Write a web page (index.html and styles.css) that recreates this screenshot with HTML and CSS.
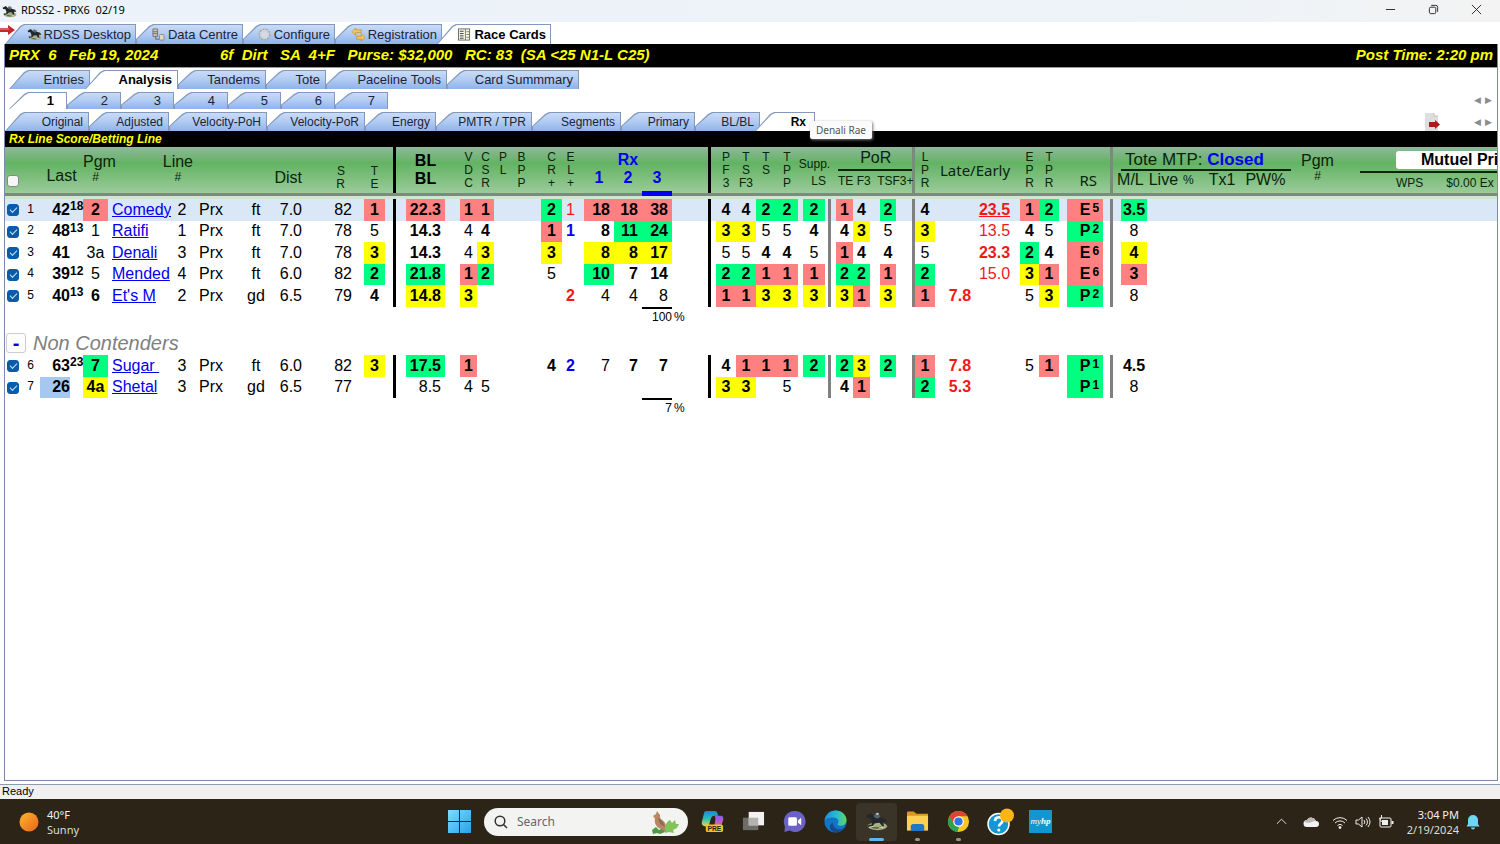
FILE: index.html
```html
<!DOCTYPE html>
<html lang="en">
<head>
	<meta charset="UTF-8">
	<title>RDSS2 - PRX6 02/19</title>
	<link rel="stylesheet" href="styles.css">
</head>
<body>
	<svg class="defs" aria-hidden="true">
		<symbol id="horse" viewBox="0 0 24 20">
			<ellipse cx="13" cy="15" rx="10" ry="4" fill="#a9ae85"/>
			<path d="M3 13c3 3 9 5 14 3" stroke="#5f7040" stroke-width="2" fill="none"/>
			<path d="M1 4l5-3 3 3 2 1 6 1 4 1 2 4-3-1-1 2 1 3h-2l-3-4-5 1-2 3-5 1v-1.500l4-1.500v-3L5 6 2 6.500z" fill="#23292b"/>
			<path d="M9 5l2-4h3l2 4-3 2z" fill="#53646b"/>
			<path d="M12 1h2v2h-2z" fill="#d9dedd"/>
			<path d="M4 16l5-1M14 17l5-1" stroke="#e3dfc8" fill="none"/>
		</symbol>
	</svg>

	<header class="titlebar">
		<svg class="title-icon"><use href="#horse"/></svg>
		<span class="title">RDSS2 - PRX6&nbsp; 02/19</span>
		<div class="win-btns">
			<button aria-label="Minimize"><svg viewBox="0 0 12 12"><path d="M1 6h10"/></svg></button>
			<button aria-label="Restore"><svg viewBox="0 0 12 12"><rect x="1.500" y="3.500" width="7" height="7" rx="1.500"/><path d="M3.500 1.500h5a2 2 0 0 1 2 2v5"/></svg></button>
			<button aria-label="Close"><svg viewBox="0 0 12 12"><path d="M1 1l10 10M11 1L1 11"/></svg></button>
		</div>
	</header>

	<nav class="tabs tabs-main">
		<svg class="red-arrow" viewBox="0 0 15 10"><path d="M0 3h8V0l7 5-7 5V7H0z" fill="#c8262c"/><path d="M0 4h9" stroke="#ec8d8d"/></svg>
		<button class="tab"><svg viewBox="0 0 24 20"><use href="#horse"/></svg>RDSS Desktop</button>
		<button class="tab"><svg viewBox="0 0 16 14"><path d="M2 1h5v8H2zM2 4h5M2 6h5" fill="#c9c5b4" stroke="#77736a"/><path d="M5 9v3h4" stroke="#666" fill="none"/><rect x="9" y="7" width="5" height="6" rx="1" fill="#dedac6" stroke="#8b877b"/></svg>Data Centre</button>
		<button class="tab"><svg viewBox="0 0 16 14"><circle cx="8" cy="7" r="5" fill="none" stroke="#a9a9a9" stroke-width="3" stroke-dasharray="2 1"/><circle cx="8" cy="7" r="4" fill="#cfdcf0" stroke="#d6d4cf" stroke-width="2"/></svg>Configure</button>
		<button class="tab"><svg viewBox="0 0 16 14"><path d="M1 4l4-4v2h6v3H5v3zM15 10l-4 4v-2H6V9h5V6z" fill="#f3c75a" stroke="#c08a26" stroke-width=".7"/></svg>Registration</button>
		<button class="tab active"><svg viewBox="0 0 16 14"><rect x="1.500" y="1" width="12" height="12" fill="#f6f6ee" stroke="#666"/><path d="M3 3.500h4M3 6h4M3 8.500h4M3 11h4" stroke="#333"/><path d="M9 1v12M10 4h3M10 7h3M10 10h3" stroke="#807c55"/></svg>Race Cards</button>
	</nav>

	<main class="panel">
		<div class="race-bar">
			<span class="race-date">PRX  6   Feb 19, 2024</span>
			<span class="race-info">6f  Dirt   SA  4+F   Purse: $32,000   RC: 83  (SA &lt;25 N1-L C25)</span>
			<span class="post-time">Post Time: 2:20 pm</span>
		</div>

		<nav class="tabs tabs-sub">
			<button class="tab w-entries">Entries</button>
			<button class="tab w-analysis active">Analysis</button>
			<button class="tab w-tandems">Tandems</button>
			<button class="tab w-tote">Tote</button>
			<button class="tab w-tools">Paceline Tools</button>
			<button class="tab w-card">Card Summmary</button>
		</nav>

		<nav class="tabs tabs-num">
			<button class="tab active">1</button>
			<button class="tab">2</button>
			<button class="tab">3</button>
			<button class="tab">4</button>
			<button class="tab">5</button>
			<button class="tab">6</button>
			<button class="tab">7</button>
			<div class="scroller">
				<button aria-label="Previous race tabs">◀</button>
				<button aria-label="Next race tabs">▶</button>
			</div>
		</nav>

		<nav class="tabs tabs-view">
			<button class="tab">Original</button>
			<button class="tab">Adjusted</button>
			<button class="tab">Velocity-PoH</button>
			<button class="tab">Velocity-PoR</button>
			<button class="tab">Energy</button>
			<button class="tab">PMTR / TPR</button>
			<button class="tab">Segments</button>
			<button class="tab">Primary</button>
			<button class="tab">BL/BL</button>
			<button class="tab active">Rx</button>
			<div class="tip-anchor"><span class="tip">Denali Rae</span></div>
			<div class="scroller">
				<svg class="doc" viewBox="0 0 16 18"><path d="M0 0h9l4 3v15H0z" fill="#dedede"/><path d="M9 0v3h4" fill="#fff" stroke="#999" stroke-width=".5"/><path d="M4 9h6V7l5 4.500-5 4.500v-2H4z" fill="#a81c1c"/></svg>
				<button aria-label="Previous views">◀</button>
				<button aria-label="Next views">▶</button>
			</div>
		</nav>

		<h1 class="view-title">Rx Line Score/Betting Line</h1>

		<table class="grid">
			<colgroup>
				<col class="c16"><col class="c19"><col class="c30"><col class="c13"><col class="c25"><col class="c63"><col class="c22"><col class="c47"><col class="c32"><col class="c32"><col class="c50"><col class="c31">
				<col class="c11"><col class="c49"><col class="c32"><col class="c17"><col class="c18"><col class="c19"><col class="c31"><col class="c17"><col class="c35"><col class="c28"><col class="c30">
				<col class="c39"><col class="c25"><col class="c20"><col class="c20"><col class="c22"><col class="c27">
				<col class="c6"><col class="c22"><col class="c17"><col class="c26">
				<col class="c19"><col class="c20"><col class="c40"><col class="c40"><col class="c24"><col class="c20"><col class="c44">
				<col class="c10"><col class="c34"><col>
			</colgroup>
			<thead>
				<tr class="head">
					<th class="h-check"><input type="checkbox" aria-label="Select all"></th>
					<th></th>
					<th colspan="2" class="h-last">Last</th>
					<th class="h-two">Pgm<small>#</small></th>
					<th colspan="2" class="h-two h-line"><span>Line<small>#</small></span></th>
					<th></th>
					<th colspan="2" class="h-dist">Dist</th>
					<th class="vert low h-sr">S<br>R</th>
					<th class="vert low g10">T<br>E</th>
					<th class="bar"></th>
					<th class="h-bl g10">BL<br>BL</th>
					<th class="vert g15">V<br>D<br>C</th>
					<th class="vert">C<br>S<br>R</th>
					<th class="vert">P<br>L</th>
					<th class="vert">B<br>P<br>P</th>
					<th class="vert g10">C<br>R<br>+</th>
					<th class="vert">E<br>L<br>+</th>
					<th colspan="3" class="h-rx g5">Rx<div><span>1</span><span>2</span><span class="picked">3</span></div></th>
					<th class="bar"></th>
					<th class="vert g5">P<br>F<br>3</th>
					<th class="vert">T<br>S<br>F3</th>
					<th class="vert">T<br>S</th>
					<th class="vert">T<br>P<br>P</th>
					<th colspan="2" class="h-supp">Supp.<span>LS</span></th>
					<th colspan="3" class="h-por g5"><div>PoR<span>TE F3&nbsp; TSF3+</span></div></th>
					<th class="bar grey"></th>
					<th class="vert">L<br>P<br>R</th>
					<th colspan="2" class="h-late">Late/Early</th>
					<th class="vert g5">E<br>P<br>R</th>
					<th class="vert">T<br>P<br>R</th>
					<th class="h-rs">RS</th>
					<th class="bar grey"></th>
					<th colspan="2" class="h-tote">
						<div class="tote">
							<div class="tote-pool">
								<p class="tote-top">Tote MTP: <b>Closed</b></p>
								<p class="tote-cols"><span>M/L</span> <span>Live</span> <small>%</small> <span class="tx">Tx1</span> <span>PW%</span></p>
							</div>
							<div class="tote-pgm">Pgm<small>#</small></div>
							<div class="mutuel">
								<p class="mutuel-top">Mutuel Pri</p>
								<p class="mutuel-cols"><span>WPS</span><span>$0.00 Ex</span></p>
							</div>
						</div>
					</th>
				</tr>
				<tr class="rule"><td colspan="43"></td></tr>
			</thead>

			<tbody class="horses">
				<tr class="current">
					<td><input type="checkbox" checked aria-label="Comedy"></td><td>1</td><td>42</td><td>18</td><td class="r">2</td><td><a href="#">Comedy</a></td><td>2</td><td>Prx</td><td>ft</td><td>7.0</td><td>82</td><td class="r">1</td>
					<td></td><td class="r">22.3</td><td class="r">1</td><td class="r">1</td><td></td><td></td><td class="g">2</td><td class="red">1</td><td class="r">18</td><td class="r">18</td><td class="r">38</td>
					<td></td><td class="b">4</td><td class="b">4</td><td class="g">2</td><td class="g">2</td><td class="g">2</td>
					<td></td><td class="r">1</td><td class="b">4</td><td class="g">2</td>
					<td></td><td class="b">4</td><td></td><td class="red b u">23.5</td><td class="r">1</td><td class="g">2</td><td class="r">E<sup>5</sup></td>
					<td></td><td class="g">3.5</td><td></td>
				</tr>
				<tr>
					<td><input type="checkbox" checked aria-label="Ratifi"></td><td>2</td><td>48</td><td>13</td><td>1</td><td><a href="#">Ratifi</a></td><td>1</td><td>Prx</td><td>ft</td><td>7.0</td><td>78</td><td>5</td>
					<td></td><td class="b">14.3</td><td>4</td><td class="b">4</td><td></td><td></td><td class="r">1</td><td class="blue b">1</td><td class="b">8</td><td class="g">11</td><td class="g">24</td>
					<td></td><td class="y">3</td><td class="y">3</td><td>5</td><td>5</td><td class="b">4</td>
					<td></td><td class="b">4</td><td class="y">3</td><td>5</td>
					<td></td><td class="y">3</td><td></td><td class="red">13.5</td><td class="b">4</td><td>5</td><td class="g">P<sup>2</sup></td>
					<td></td><td>8</td><td></td>
				</tr>
				<tr>
					<td><input type="checkbox" checked aria-label="Denali"></td><td>3</td><td>41</td><td></td><td>3a</td><td><a href="#">Denali</a></td><td>3</td><td>Prx</td><td>ft</td><td>7.0</td><td>78</td><td class="y">3</td>
					<td></td><td class="b">14.3</td><td>4</td><td class="y">3</td><td></td><td></td><td class="y">3</td><td></td><td class="y">8</td><td class="y">8</td><td class="y">17</td>
					<td></td><td>5</td><td>5</td><td class="b">4</td><td class="b">4</td><td>5</td>
					<td></td><td class="r">1</td><td class="b">4</td><td class="b">4</td>
					<td></td><td>5</td><td></td><td class="red b">23.3</td><td class="g">2</td><td class="b">4</td><td class="r">E<sup>6</sup></td>
					<td></td><td class="y">4</td><td></td>
				</tr>
				<tr>
					<td><input type="checkbox" checked aria-label="Mended"></td><td>4</td><td>39</td><td>12</td><td>5</td><td><a href="#">Mended</a></td><td>4</td><td>Prx</td><td>ft</td><td>6.0</td><td>82</td><td class="g">2</td>
					<td></td><td class="g">21.8</td><td class="r">1</td><td class="g">2</td><td></td><td></td><td>5</td><td></td><td class="g">10</td><td class="b">7</td><td class="b">14</td>
					<td></td><td class="g">2</td><td class="g">2</td><td class="r">1</td><td class="r">1</td><td class="r">1</td>
					<td></td><td class="g">2</td><td class="g">2</td><td class="r">1</td>
					<td></td><td class="g">2</td><td></td><td class="red">15.0</td><td class="y">3</td><td class="r">1</td><td class="r">E<sup>6</sup></td>
					<td></td><td class="r">3</td><td></td>
				</tr>
				<tr>
					<td><input type="checkbox" checked aria-label="Et's M"></td><td>5</td><td>40</td><td>13</td><td class="b">6</td><td><a href="#">Et's M</a></td><td>2</td><td>Prx</td><td>gd</td><td>6.5</td><td>79</td><td class="b">4</td>
					<td></td><td class="y">14.8</td><td class="y">3</td><td></td><td></td><td></td><td></td><td class="red b">2</td><td>4</td><td>4</td><td>8</td>
					<td></td><td class="r">1</td><td class="r">1</td><td class="y">3</td><td class="y">3</td><td class="y">3</td>
					<td></td><td class="y">3</td><td class="r">1</td><td class="y">3</td>
					<td></td><td class="r">1</td><td class="red b">7.8</td><td></td><td>5</td><td class="y">3</td><td class="g">P<sup>2</sup></td>
					<td></td><td>8</td><td></td>
				</tr>
			</tbody>
			<tbody>
				<tr class="total"><td colspan="22"></td><td><span>100</span></td><td colspan="20">%</td></tr>
				<tr class="section"><td colspan="43"><div><button aria-label="Collapse Non Contenders">-</button><em>Non Contenders</em></div></td></tr>
			</tbody>
			<tbody class="horses">
				<tr>
					<td><input type="checkbox" checked aria-label="Sugar"></td><td>6</td><td>63</td><td>23</td><td class="g">7</td><td><a href="#">Sugar&nbsp;</a></td><td>3</td><td>Prx</td><td>ft</td><td>6.0</td><td>82</td><td class="y">3</td>
					<td></td><td class="g">17.5</td><td class="r">1</td><td></td><td></td><td></td><td class="b">4</td><td class="blue b">2</td><td>7</td><td class="b">7</td><td class="b">7</td>
					<td></td><td class="b">4</td><td class="r">1</td><td class="r">1</td><td class="r">1</td><td class="g">2</td>
					<td></td><td class="g">2</td><td class="y">3</td><td class="g">2</td>
					<td></td><td class="r">1</td><td class="red b">7.8</td><td></td><td>5</td><td class="r">1</td><td class="g">P<sup>1</sup></td>
					<td></td><td class="b">4.5</td><td></td>
				</tr>
				<tr>
					<td><input type="checkbox" checked aria-label="Shetal"></td><td>7</td><td class="off">26</td><td></td><td class="y">4a</td><td><a href="#">Shetal</a></td><td>3</td><td>Prx</td><td>gd</td><td>6.5</td><td>77</td><td></td>
					<td></td><td>8.5</td><td>4</td><td>5</td><td></td><td></td><td></td><td></td><td></td><td></td><td></td>
					<td></td><td class="y">3</td><td class="y">3</td><td></td><td>5</td><td></td>
					<td></td><td class="b">4</td><td class="r">1</td><td></td>
					<td></td><td class="g">2</td><td class="red b">5.3</td><td></td><td></td><td></td><td class="g">P<sup>1</sup></td>
					<td></td><td>8</td><td></td>
				</tr>
			</tbody>
			<tbody>
				<tr class="total"><td colspan="22"></td><td><span>7</span></td><td colspan="20">%</td></tr>
			</tbody>
		</table>
	</main>

	<div class="status">Ready</div>

	<footer class="taskbar">
		<div class="weather">
			<svg viewBox="0 0 20 20"><defs><linearGradient id="sun" x2="1" y2="1"><stop stop-color="#ffb52e"/><stop offset="1" stop-color="#e8641b"/></linearGradient></defs><circle cx="10" cy="10" r="9.500" fill="url(#sun)"/></svg>
			<p>40°F<span>Sunny</span></p>
		</div>

		<div class="apps">
			<button aria-label="Start"><svg viewBox="0 0 22 22"><defs><linearGradient id="win" x2="1" y2="1"><stop stop-color="#7fdcfb"/><stop offset="1" stop-color="#23a3ee"/></linearGradient></defs><path d="M0 0h10.500v10.500H0zM11.500 0H22v10.500H11.500zM0 11.500h10.500V22H0zM11.500 11.500H22V22H11.500z" fill="url(#win)"/></svg></button>
			<label class="search">
				<svg class="lens" viewBox="0 0 14 14"><circle cx="6" cy="6" r="4.800"/><path d="M9.500 9.500L13 13"/></svg>
				<input type="text" placeholder="Search" aria-label="Search">
				<svg class="bird" viewBox="0 0 28 24"><path d="M14 18c1-7 5-8 5-8l2 3 3-3 1 4h3l-2 4-4 2 1 3-5-1-4 1z" fill="#7fc45a"/><path d="M1 20l4-3 3 3 4-2 2 4-5 2-3-1-4 1z" fill="#4d9a45"/><path d="M6 1l-1 3-3 2 2 2c-1 5 1 9 6 11l5 3-1-4c2-3 0-6-3-8-2-1-2-3-2-5z" fill="#b98663"/><path d="M7 8c3 1 6 4 7 9l-5-3z" fill="#8f6a55"/><path d="M4 7l-2 0 2 1.500z" fill="#e8a33c"/></svg>
			</label>
			<button aria-label="Copilot"><svg viewBox="0 0 24 24"><defs><linearGradient id="cop" x2="0" y2="1"><stop stop-color="#1f82e8"/><stop offset=".5" stop-color="#26c0b4"/><stop offset="1" stop-color="#e8d84a"/></linearGradient><linearGradient id="cop2" x2="0" y2="1"><stop stop-color="#8b5cf0"/><stop offset="1" stop-color="#f0648c"/></linearGradient></defs><path d="M6 1h8c2 0 3 1 4 5h-4c-2 0-3 1-4 4l-2 7H5c-3 0-5-2-4-5l2-8c0-2 1-3 3-3z" fill="url(#cop)"/><path d="M14 6h6c3 0 4 2 3 5l-2 6c-1 2-2 3-4 3h-6c2 0 2-2 3-4l1-6c0-2 0-3-1-4z" fill="url(#cop2)"/><rect x="5" y="15" width="18" height="8" rx="2" fill="#f7c314"/><text x="14" y="22" class="pre">PRE</text></svg></button>
			<button aria-label="Task view"><svg viewBox="0 0 24 24"><rect x="1" y="8" width="16" height="13" fill="#6e6c69"/><rect x="7" y="2" width="16" height="14" fill="#f2f2f2"/><rect x="7" y="8" width="10" height="8" fill="#b5b3b0"/></svg></button>
			<button aria-label="Chat"><svg viewBox="0 0 24 24"><path d="M12 1a11 11 0 1 1-5 20.500L1.500 23 2 17A11 11 0 0 1 12 1z" fill="#6b63c4"/><rect x="5.500" y="7.500" width="9" height="9" rx="1.500" fill="#fff"/><path d="M15.500 11l3.500-3v8l-3.500-3z" fill="#fff"/></svg></button>
			<button aria-label="Edge"><svg viewBox="0 0 24 24"><defs><linearGradient id="edge" x2="1"><stop stop-color="#1c8fdc"/><stop offset=".6" stop-color="#2bbfd0"/><stop offset="1" stop-color="#63d64e"/></linearGradient></defs><circle cx="12" cy="12" r="11.500" fill="#1373c4"/><path d="M.6 11C1.500 4.500 6.500.500 12 .500c7 0 11.500 5 11.500 10 0 4-3 6-6 6-2.500 0-4-1-3-2.500 1.500-2 .5-5.500-3.500-6C6.500 7.500 2 9 .6 11z" fill="url(#edge)"/><path d="M9 13c0 5 4.500 8 9 7 1.500-.5 3-1.500 4-2.500-2 4-6 6-10 6-6-1-8-7-3-10.500z" fill="#154a8f"/></svg></button>
			<button class="on" aria-label="RDSS2"><svg viewBox="0 0 24 20"><use href="#horse"/></svg></button>
			<button class="run" aria-label="File Explorer"><svg viewBox="0 0 24 24"><path d="M1 3c0-1 .5-1.500 1.500-1.500H8L11 4h12v5H1z" fill="#d9981a"/><path d="M1 6h22v15.500H1z" fill="#fbd053"/><path d="M5 22v-5c0-1.500 1-2.500 2.500-2.500h9c1.500 0 2.500 1 2.500 2.500v5z" fill="#1d78c9"/></svg></button>
			<button class="run" aria-label="Chrome"><svg viewBox="0 0 24 24"><circle cx="12" cy="12" r="11" fill="#f9c620"/><path d="M2.500 6.500A11 11 0 0 1 21.500 6.500H12L7 15z" fill="#e14134"/><path d="M2.500 6.500L7.500 15l5 2.500L11 23A11 11 0 0 1 2.500 6.500z" fill="#2fa052"/><circle cx="12" cy="12" r="5.500" fill="#fff"/><circle cx="12" cy="12" r="4.300" fill="#3473e0"/></svg></button>
			<button aria-label="HP Support"><svg class="wide" viewBox="0 0 28 28"><circle cx="12.500" cy="16" r="10.500" fill="#1597d3" stroke="#fff" stroke-width="1.500"/><path d="M9 13c0-5 7.500-5 7.500-.5 0 3-3.500 2.800-3.500 6" fill="none" stroke="#fff" stroke-width="2.600"/><circle cx="12.800" cy="22" r="1.600" fill="#fff"/><circle cx="21" cy="7.500" r="7" fill="#fbb615"/></svg></button>
			<button aria-label="myHP"><span class="myhp">my<b>hp</b></span></button>
		</div>

		<div class="tray">
			<svg class="t12" viewBox="0 0 12 12"><path d="M1 8.500l5-5 5 5"/></svg>
			<svg class="cloud" viewBox="0 0 16 12"><path d="M4 11a3.500 3.500 0 0 1 0-7 5 5 0 0 1 9 1 3 3 0 0 1 0 6z" fill="#f3f3f3"/><path d="M1 6a3.500 3.500 0 0 1 3-2 5 5 0 0 1 9 1c-4 0-5 3-12 1z" fill="#bbb7b4"/></svg>
			<svg class="t16" viewBox="0 0 16 16"><path d="M1 6.500a10 10 0 0 1 14 0M3 9a7 7 0 0 1 10 0M5.500 11.500a3.500 3.500 0 0 1 5 0"/><circle cx="8" cy="13.500" r="1" fill="#eee"/></svg>
			<svg class="t16" viewBox="0 0 16 16"><path d="M1 6h2.500L7 3v10l-3.500-3H1zM9 6a3 3 0 0 1 0 4M11 4.500a5 5 0 0 1 0 7M13 3a8 8 0 0 1 0 10"/></svg>
			<svg class="t16" viewBox="0 0 16 16"><rect x="2" y="4" width="11" height="9" rx="1"/><path d="M14.500 7v3" stroke-width="2"/><rect x="4" y="6" width="6" height="5" fill="#eee" stroke="none"/><path d="M3.500 1v3H1.500l2 4"/></svg>
			<p class="clock">3:04 PM<span>2/19/2024</span></p>
			<svg class="bell" viewBox="0 0 14 16"><path d="M7 1a5 5 0 0 1 5 5v4l1.500 2.500H.5L2 10V6a5 5 0 0 1 5-5zM5 13.500h4a2 2 0 0 1-4 0z" fill="#6fd6f5"/></svg>
		</div>
	</footer>
</body>
</html>
```
FILE: styles.css
```css
*{
	box-sizing: border-box;
}
body{
	margin: 0;
	height: 100vh;
	display: flex;
	flex-direction: column;
	overflow: hidden;
	background: #fff;
	color: #000;
	font: 13px "Liberation Sans", Arial, sans-serif;
}
p{
	margin: 0;
}
button{
	border: 0;
	padding: 0;
	background: none;
	color: inherit;
	font: inherit;
}
.defs{
	position: absolute;
	width: 0;
	height: 0;
}

/* title bar */
.titlebar{
	display: flex;
	align-items: center;
	height: 22px;
	padding-left: 2px;
	background: linear-gradient(to right, #ebf2fa, #eef3f8 80%, #f3f3f3);
	font: 11px/20px "Noto Sans", sans-serif;
}
.title-icon{
	width: 15px;
	height: 13px;
	margin-right: 4px;
}
.title{
	padding-bottom: 2px;
}
.win-btns{
	display: flex;
	margin-left: auto;
	margin-right: 2px;
}
.win-btns button{
	width: 43px;
	height: 20px;
}
.win-btns svg{
	width: 11px;
	height: 11px;
	fill: none;
	stroke: #222;
}

/* tabs */
.tabs{
	display: flex;
	align-items: flex-end;
	flex: none;
}
.tab{
	position: relative;
	display: flex;
	align-items: center;
	justify-content: flex-end;
	height: 19px;
	padding-right: 6px;
	background: #8298bd;
	clip-path: polygon(0 100%, 0 75%, 13px 2px, 17px 0, 100% 0, 100% 100%);
	color: #1a2436;
	white-space: nowrap;
	z-index: 0;
}
.tab::before{
	content: "";
	position: absolute;
	inset: 1px 1px 0 1px;
	background: linear-gradient(to bottom, #c9dbf6, #b3ccf3 45%, #8fb3ea);
	clip-path: polygon(0 100%, 0 75%, 13px 2px, 17px 0, 100% 0, 100% 100%);
	z-index: -1;
}
.tab:first-of-type,
.tab:first-of-type::before,
.tab.active,
.tab.active::before{
	clip-path: polygon(0 100%, 15px 2px, 19px 0, 100% 0, 100% 100%);
}
.tab.active{
	z-index: 1;
	margin-left: -5px;
	color: #000;
	font-weight: bold;
}
.tab.active::before{
	background: #fff;
}
.tab svg{
	flex: none;
	width: 15px;
	height: 13px;
	margin-right: 2px;
}
.tabs-main{
	height: 22px;
}
.tabs-main .tab{
	height: 20px;
	padding-right: 5px;
	width: 107px;
}
.tabs-main .tab:nth-of-type(1){ width: 131px; margin-left: -10px; }
.tabs-main .tab:nth-of-type(3){ width: 92px; }
.tabs-main .tab:nth-of-type(5){ width: 114px; }
.red-arrow{
	width: 15px;
	height: 10px;
	align-self: flex-start;
	margin-top: 3px;
}
.tabs-sub{
	height: 21px;
	padding-left: 4px;
}
.w-entries{ width: 81px; }
.w-analysis{ width: 93px; }
.w-tandems{ width: 88px; }
.w-tote{ width: 60px; }
.w-tools{ width: 121px; }
.w-card{ width: 132px; }
.tabs-num{
	height: 20px;
	padding-left: 4px;
}
.tabs-num .tab{
	width: 53px;
	height: 17px;
	padding-right: 13px;
}
.tabs-num .tab:nth-of-type(even){
	width: 54px;
}
.tabs-num .tab.active{
	width: 58px;
	margin-left: 0;
}
.tabs-view{
	height: 22px;
	font-size: 12px;
}
.tabs-view .tab:nth-of-type(1){ width: 84px; }
.tabs-view .tab:nth-of-type(2){ width: 80px; }
.tabs-view .tab:nth-of-type(3),
.tabs-view .tab:nth-of-type(4){ width: 98px; }
.tabs-view .tab:nth-of-type(5){ width: 71px; }
.tabs-view .tab:nth-of-type(6){ width: 96px; }
.tabs-view .tab:nth-of-type(7){ width: 89px; }
.tabs-view .tab:nth-of-type(8){ width: 74px; }
.tabs-view .tab:nth-of-type(9){ width: 65px; }
.tabs-view .tab:nth-of-type(10){
	width: 60px;
	padding-right: 9px;
}
.scroller{
	display: flex;
	align-items: center;
	gap: 2px;
	height: 18px;
	margin-left: auto;
	padding-right: 4px;
	color: #8c8c8c;
	font: 9px "DejaVu Sans", sans-serif;
}
.scroller button{
	width: 9px;
}
.doc{
	width: 16px;
	height: 18px;
	margin-right: 30px;
}
.tip-anchor{
	position: relative;
	align-self: flex-start;
	z-index: 2;
}
.tip{
	position: absolute;
	top: 12px;
	left: -5px;
	padding: 0 6px;
	border-radius: 2px;
	background: #fbfbfb;
	box-shadow: 1px 1px 3px #777;
	color: #555;
	font: 10px/18px "Noto Sans", sans-serif;
	white-space: nowrap;
}

/* main panel */
.panel{
	flex: 1;
	min-height: 0;
	display: flex;
	flex-direction: column;
	margin: 0 2px 0 4px;
	border: solid #7c8bab;
	border-width: 0 1px 1px;
	overflow: hidden;
}
.race-bar{
	display: flex;
	height: 24px;
	padding: 0 4px;
	border-bottom: 1px solid #999;
	background: #000;
	color: #ff0;
	font: italic bold 15px/22px "Liberation Sans", Arial, sans-serif;
	white-space: pre;
}
.race-date{
	width: 211px;
}
.post-time{
	margin-left: auto;
}
.view-title{
	flex: none;
	margin: 0;
	padding-left: 4px;
	background: #000;
	color: #ff0;
	font: italic bold 12px/16px "Liberation Sans", Arial, sans-serif;
}

/* grid */
.grid{
	width: 100%;
	table-layout: fixed;
	border-spacing: 0;
	font-size: 16px;
	line-height: 19px;
}
.c6{ width: 6px; }
.c10{ width: 10px; }
.c11{ width: 11px; }
.c13{ width: 13px; }
.c16{ width: 16px; }
.c17{ width: 17px; }
.c18{ width: 18px; }
.c19{ width: 19px; }
.c20{ width: 20px; }
.c22{ width: 22px; }
.c24{ width: 24px; }
.c25{ width: 25px; }
.c26{ width: 26px; }
.c27{ width: 27px; }
.c28{ width: 28px; }
.c30{ width: 30px; }
.c31{ width: 31px; }
.c32{ width: 32px; }
.c34{ width: 34px; }
.c35{ width: 35px; }
.c39{ width: 39px; }
.c40{ width: 40px; }
.c44{ width: 44px; }
.c47{ width: 47px; }
.c49{ width: 49px; }
.c50{ width: 50px; }
.c63{ width: 63px; }
.grid th,
.grid td{
	padding: 0;
	background-clip: padding-box;
	white-space: nowrap;
}
.grid input{
	appearance: none;
	display: block;
	width: 12px;
	height: 12px;
	margin: 2px 0 0 2px;
	border: 1px solid #888;
	border-radius: 3px;
	background: #f6f6f6;
}
.grid input:checked{
	border-color: #0a5cab;
	background: #0a5cab;
}
.grid input:checked::after{
	content: "";
	display: block;
	width: 6px;
	height: 3px;
	margin: 2px;
	border: solid #cfe3f5;
	border-width: 0 0 1px 1px;
	transform: rotate(-45deg);
}

.head{
	height: 46px;
	background: linear-gradient(to bottom, #8fb89b, #63b363 35%, #9bcb9b);
}
.head th{
	vertical-align: top;
	padding-top: 4px;
	color: #0a240a;
	font-weight: normal;
	line-height: 18px;
}
.head small{
	display: block;
	font-size: 12px;
	line-height: 12px;
}
.head .g5{ border-left: 5px solid transparent; }
.head .g10{ border-left: 10px solid transparent; }
.head .g15{ border-left: 15px solid transparent; }
.head .bar{ border-right: 3px solid #000; }
.head .grey{ border-color: #7b8b7b; }
.head .vert{
	font-size: 12px;
	line-height: 13px;
}
.head .low{
	padding-top: 18px;
}
.head .h-check{
	padding-top: 26px;
}
.head .h-last{
	padding-top: 20px;
}
.head .h-two{
	padding-top: 6px;
}
.head .h-line{
	text-align: right;
}
.h-line span{
	display: inline-block;
	text-align: center;
}
.head .h-dist{
	padding: 22px 2px 0 0;
	text-align: right;
}
.head .h-sr{
	padding-right: 9px;
	text-align: right;
}
.head .h-bl{
	padding-top: 5px;
	color: #000;
	font-weight: bold;
}
.head .h-rx{
	color: #00e;
	font-weight: bold;
}
.h-rx div{
	display: grid;
	grid-template-columns: 30px 28px 30px;
}
.picked{
	position: relative;
}
.picked::after{
	content: "";
	position: absolute;
	left: 0;
	right: 0;
	bottom: -9px;
	height: 5px;
	background: #00e;
}
.head .h-supp{
	padding-top: 9px;
	font-size: 12px;
	line-height: 17px;
}
.h-supp span{
	display: block;
	padding-right: 5px;
	text-align: right;
}
.head .h-por{
	padding-top: 2px;
}
.h-por div{
	width: max-content;
	padding-left: 2px;
}
.h-por span{
	display: block;
	margin-top: 2px;
	border-top: 2px solid #0a240a;
	font-size: 12px;
	line-height: 20px;
}
.head .h-late{
	padding-top: 13px;
	font: 15px/20px "Noto Sans", sans-serif;
}
.head .h-rs{
	padding: 24px 6px 0 0;
	font: 15px/18px "Noto Sans", sans-serif;
	text-align: right;
}
.tote{
	display: flex;
	padding-left: 4px;
	overflow: hidden;
	text-align: left;
}
.tote-pool{
	width: 174px;
}
.tote-top{
	margin-left: 4px;
	border-bottom: 2px solid #0a240a;
	padding-left: 4px;
	font-size: 17px;
}
.tote-top b{
	color: #00e;
}
.tote-cols{
	display: flex;
	gap: 5px;
	line-height: 17px;
}
.tote-cols small{
	line-height: 18px;
}
.tote-cols .tx{
	margin: 0 5px 0 10px;
}
.tote-pgm{
	margin-left: 10px;
	padding-top: 1px;
	text-align: center;
}
.mutuel{
	flex: 1;
	min-width: 0;
	margin-left: 26px;
}
.mutuel-top{
	margin-left: 36px;
	padding-left: 25px;
	border-radius: 3px 0 0 3px;
	background: #fff;
	color: #000;
	font-weight: bold;
}
.mutuel-cols{
	display: flex;
	gap: 23px;
	margin-top: 2px;
	padding-left: 36px;
	border-top: 2px solid #0a240a;
	font-size: 12px;
	line-height: 20px;
}
.rule td{
	height: 6px;
	border-top: 3px solid #7e8a7e;
	background: #cfe6d0;
}

.horses tr{
	height: 22px;
}
.horses tr:nth-child(even){
	height: 21px;
}
.horses .current{
	background: #dae7f7;
}
.horses td{
	padding-bottom: 2px;
	text-align: center;
	border: 0 solid transparent;
}
.horses td:nth-child(2){
	font-size: 12px;
}
.horses td:nth-child(3){
	font-weight: bold;
	text-align: right;
}
.horses td:nth-child(4){
	font-size: 12px;
	font-weight: bold;
	line-height: 12px;
	vertical-align: top;
	padding-top: 1px;
}
.horses td:nth-child(6){
	overflow: hidden;
	padding-left: 4px;
	text-align: left;
}
.horses td:nth-child(8){
	padding-left: 6px;
	text-align: left;
}
.horses td:nth-child(10),
.horses td:nth-child(11){
	padding-right: 2px;
	text-align: right;
}
/* transparent borders keep the gap between column groups */
.horses td:nth-child(12),
.horses td:nth-child(14),
.horses td:nth-child(19),
.horses td:nth-child(33){
	border-left-width: 10px;
}
.horses td:nth-child(15){
	border-left-width: 15px;
}
.horses td:nth-child(21),
.horses td:nth-child(25),
.horses td:nth-child(29),
.horses td:nth-child(31),
.horses td:nth-child(38){
	border-left-width: 5px;
}
.horses td:nth-child(40),
.horses td:nth-child(42){
	border-left-width: 8px;
}
.horses td:nth-child(14),
.horses td:nth-child(21),
.horses td:nth-child(22),
.horses td:nth-child(23),
.horses td:nth-child(36){
	padding-right: 4px;
	text-align: right;
}
.horses td:nth-child(37){
	padding-right: 5px;
	text-align: right;
}
.horses td:nth-child(13),
.horses td:nth-child(24){
	border-right: 3px solid #000;
}
.horses td:nth-child(30),
.horses td:nth-child(34),
.horses td:nth-child(41){
	border-right: 3px solid #808080;
}
.horses a{
	color: #00e;
}
.horses sup{
	margin-left: 2px;
	font-size: 12px;
	line-height: 12px;
	vertical-align: 3px;
}
.horses td:nth-child(40){
	padding-left: 9px;
}
.b{ font-weight: bold; }
.u{ text-decoration: underline; }
.red{ color: #f01818; }
.blue{ color: #00e; }
.r,
.g,
.y{
	font-weight: bold;
}
.r{ background-color: #ff8080; }
.g{ background-color: #00ff80; }
.y{ background-color: #ff0; }
.off{ background-color: #a6c8f0; }

.total{
	height: 24px;
}
.total td{
	font-size: 12px;
	line-height: 16px;
	text-align: right;
	vertical-align: top;
}
.total span{
	display: block;
	border-top: 2px solid #000;
}
.total td:last-child{
	padding-top: 2px;
	padding-left: 2px;
	text-align: left;
}
.section{
	height: 24px;
}
.section div{
	display: flex;
	align-items: center;
	gap: 7px;
	padding-left: 1px;
	color: #808080;
	font-size: 20px;
}
.section button{
	width: 20px;
	height: 20px;
	border: 1px solid #ccc;
	border-radius: 3px;
	background: #fdfdfd;
	color: #00e;
	font-weight: bold;
	line-height: 14px;
}

/* status bar and taskbar */
.status{
	height: 15px;
	margin-top: 3px;
	padding-left: 2px;
	border-top: 1px solid #8d99b5;
	background: #f0f0f0;
	font-size: 11px;
	line-height: 13px;
}
.taskbar{
	display: grid;
	grid-template-columns: 1fr auto 1fr;
	align-items: center;
	height: 45px;
	background: #2b2417;
	color: #f2f2f2;
	font: 11px/15px "Noto Sans", sans-serif;
}
.weather{
	display: flex;
	align-items: center;
	gap: 8px;
	padding-left: 19px;
}
.weather svg{
	width: 20px;
	height: 20px;
}
.weather span,
.clock span{
	display: block;
	color: #ddd;
}
.apps{
	display: flex;
	align-items: center;
}
.apps button{
	position: relative;
	display: flex;
	align-items: center;
	justify-content: center;
	width: 41px;
	height: 38px;
}
.apps button svg{
	width: 23px;
	height: 23px;
}
.apps button .wide{
	width: 28px;
	height: 28px;
}
.apps .on{
	border-radius: 4px;
	background: #3a3328;
}
.apps .on::after,
.apps .run::after{
	content: "";
	position: absolute;
	bottom: 0;
	width: 5px;
	height: 3px;
	border-radius: 2px;
	background: #9a958e;
}
.apps .on::after{
	width: 15px;
	background: #5bb8e8;
}
.search{
	display: flex;
	align-items: center;
	width: 204px;
	height: 28px;
	margin: 0 4px;
	padding: 0 9px 0 10px;
	border-radius: 14px;
	background: #f3f3f1;
}
.search input{
	flex: 1;
	min-width: 0;
	padding: 0;
	border: 0;
	background: none;
	font: 12px "Noto Sans", sans-serif;
}
.search input::placeholder{
	color: #666;
}
.lens{
	width: 14px;
	height: 14px;
	margin-right: 9px;
	fill: none;
	stroke: #333;
	stroke-width: 1.5;
}
.bird{
	width: 28px;
	height: 24px;
}
.pre{
	fill: #222;
	font: bold 7px "Liberation Sans", sans-serif;
	text-anchor: middle;
}
.myhp{
	width: 23px;
	height: 23px;
	background: #1296cf;
	color: #fff;
	font: italic 9px/22px "Liberation Serif", serif;
}
.tray{
	display: flex;
	align-items: center;
	justify-content: flex-end;
	gap: 7px;
	padding-right: 20px;
}
.tray svg{
	fill: none;
	stroke: #eee;
}
.tray .t12{
	width: 11px;
	height: 11px;
	margin-right: 9px;
}
.tray .t16{
	width: 16px;
	height: 16px;
}
.tray .cloud{
	width: 16px;
	height: 12px;
	margin-right: 6px;
	stroke: none;
}
.clock{
	margin-left: 6px;
	text-align: right;
}
.tray .bell{
	width: 14px;
	height: 16px;
	stroke: none;
}
```
